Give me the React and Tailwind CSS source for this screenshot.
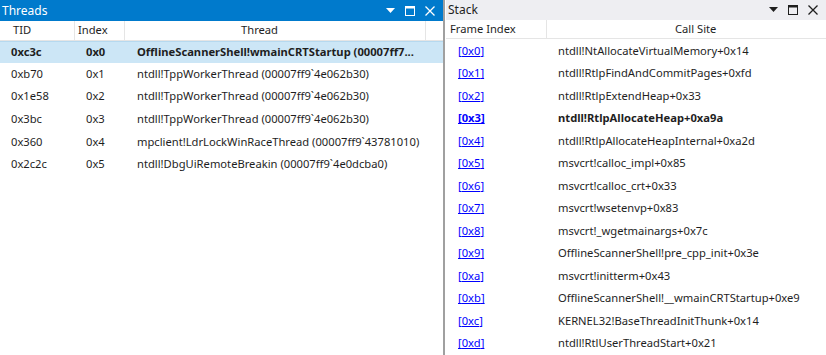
import React from 'react';

const threads = [
  { tid: '0xc3c', index: '0x0', name: 'OfflineScannerShell!wmainCRTStartup (00007ff7...', current: true },
  { tid: '0xb70', index: '0x1', name: 'ntdll!TppWorkerThread (00007ff9`4e062b30)' },
  { tid: '0x1e58', index: '0x2', name: 'ntdll!TppWorkerThread (00007ff9`4e062b30)' },
  { tid: '0x3bc', index: '0x3', name: 'ntdll!TppWorkerThread (00007ff9`4e062b30)' },
  { tid: '0x360', index: '0x4', name: 'mpclient!LdrLockWinRaceThread (00007ff9`43781010)' },
  { tid: '0x2c2c', index: '0x5', name: 'ntdll!DbgUiRemoteBreakin (00007ff9`4e0dcba0)' },
];

const frames = [
  ['0x0', 'ntdll!NtAllocateVirtualMemory+0x14'],
  ['0x1', 'ntdll!RtlpFindAndCommitPages+0xfd'],
  ['0x2', 'ntdll!RtlpExtendHeap+0x33'],
  ['0x3', 'ntdll!RtlpAllocateHeap+0xa9a', true],
  ['0x4', 'ntdll!RtlpAllocateHeapInternal+0xa2d'],
  ['0x5', 'msvcrt!calloc_impl+0x85'],
  ['0x6', 'msvcrt!calloc_crt+0x33'],
  ['0x7', 'msvcrt!wsetenvp+0x83'],
  ['0x8', 'msvcrt!_wgetmainargs+0x7c'],
  ['0x9', 'OfflineScannerShell!pre_cpp_init+0x3e'],
  ['0xa', 'msvcrt!initterm+0x43'],
  ['0xb', 'OfflineScannerShell!__wmainCRTStartup+0xe9'],
  ['0xc', 'KERNEL32!BaseThreadInitThunk+0x14'],
  ['0xd', 'ntdll!RtlUserThreadStart+0x21'],
];

// little window buttons: dropdown, maximize, close
function PaneButtons({ color }) {
  return (
    <div className="flex items-center">
      <svg width="9" height="5" viewBox="0 0 9 5" className="mr-[10px]">
        <path d="M0 0 H9 L4.5 5 Z" fill={color} />
      </svg>
      <svg width="10" height="10" viewBox="0 0 10 10" className="mr-[10px]">
        <rect x="0.5" y="0.5" width="9" height="9" fill="none" stroke={color} />
        <rect x="0" y="0" width="10" height="2.5" fill={color} />
      </svg>
      <svg width="10" height="10" viewBox="0 0 10 10">
        <path d="M0.5 0.5 L9.5 9.5 M9.5 0.5 L0.5 9.5" stroke={color} strokeWidth="1.3" />
      </svg>
    </div>
  );
}

export default function App() {
  return (
    <div
      className="flex h-[355px] w-[826px] bg-white text-[11.2px] text-[#1e1e1e] overflow-hidden"
      style={{ fontFamily: '"Noto Sans", "Open Sans", sans-serif' }}
    >
      {/* Threads pane */}
      <div className="flex flex-col w-[443px] shrink-0">
        <div className="flex items-center justify-between h-[21px] bg-[#007acc] text-white text-[12px] pl-[2px] pr-[8px]">
          <span>Threads</span>
          <PaneButtons color="#ffffff" />
        </div>
        <div className="flex h-[20px] items-center border-b border-[#e5e5e5]">
          <div className="w-[75px] h-full flex items-center pl-[13px] border-r border-[#e5e5e5]">TID</div>
          <div className="w-[50px] h-full flex items-center pl-[3px] border-r border-[#e5e5e5]">Index</div>
          <div className="w-[301px] h-full flex items-center pl-[116px] border-r border-[#e5e5e5]">Thread</div>
        </div>
        {threads.map((t) => (
          <div
            key={t.tid}
            className={
              t.current
                ? 'flex items-center h-[22px] bg-[#cce6f6] border-t border-[#b6d9ef] font-bold'
                : 'flex items-center h-[22.6px]'
            }
          >
            <div className="w-[75px] pl-[11px] whitespace-nowrap">{t.tid}</div>
            <div className="w-[50px] pl-[11px] whitespace-nowrap">{t.index}</div>
            <div className="flex-1 pl-[12px] whitespace-nowrap overflow-hidden">{t.name}</div>
          </div>
        ))}
      </div>

      {/* splitter */}
      <div className="w-[2px] shrink-0 bg-[#a0a0a0]" />
      <div className="w-[1px] shrink-0 bg-white" />

      {/* Stack pane */}
      <div className="flex flex-col flex-1">
        <div className="flex items-center justify-between h-[21px] bg-[#eeeef2] text-[12px] pl-[2px] pr-[8px]">
          <span>Stack</span>
          <PaneButtons color="#1e1e1e" />
        </div>
        <div className="flex h-[20px] items-center border-b border-[#e5e5e5]">
          <div className="w-[101px] h-full flex items-center pl-[4px] border-r border-[#e5e5e5]">Frame Index</div>
          <div className="flex-1 h-full flex items-center pl-[128px]">Call Site</div>
        </div>
        <div className="pt-[1px]">
          {frames.map(([idx, site, bold]) => (
            <div key={idx} className={bold ? 'flex items-center h-[22.5px] font-bold' : 'flex items-center h-[22.5px]'}>
              <div className="w-[101px] pl-[12px]">
                <span className="text-[#0000ff] underline">[{idx}]</span>
              </div>
              <div className="flex-1 pl-[11px] whitespace-nowrap">{site}</div>
            </div>
          ))}
        </div>
      </div>
    </div>
  );
}
